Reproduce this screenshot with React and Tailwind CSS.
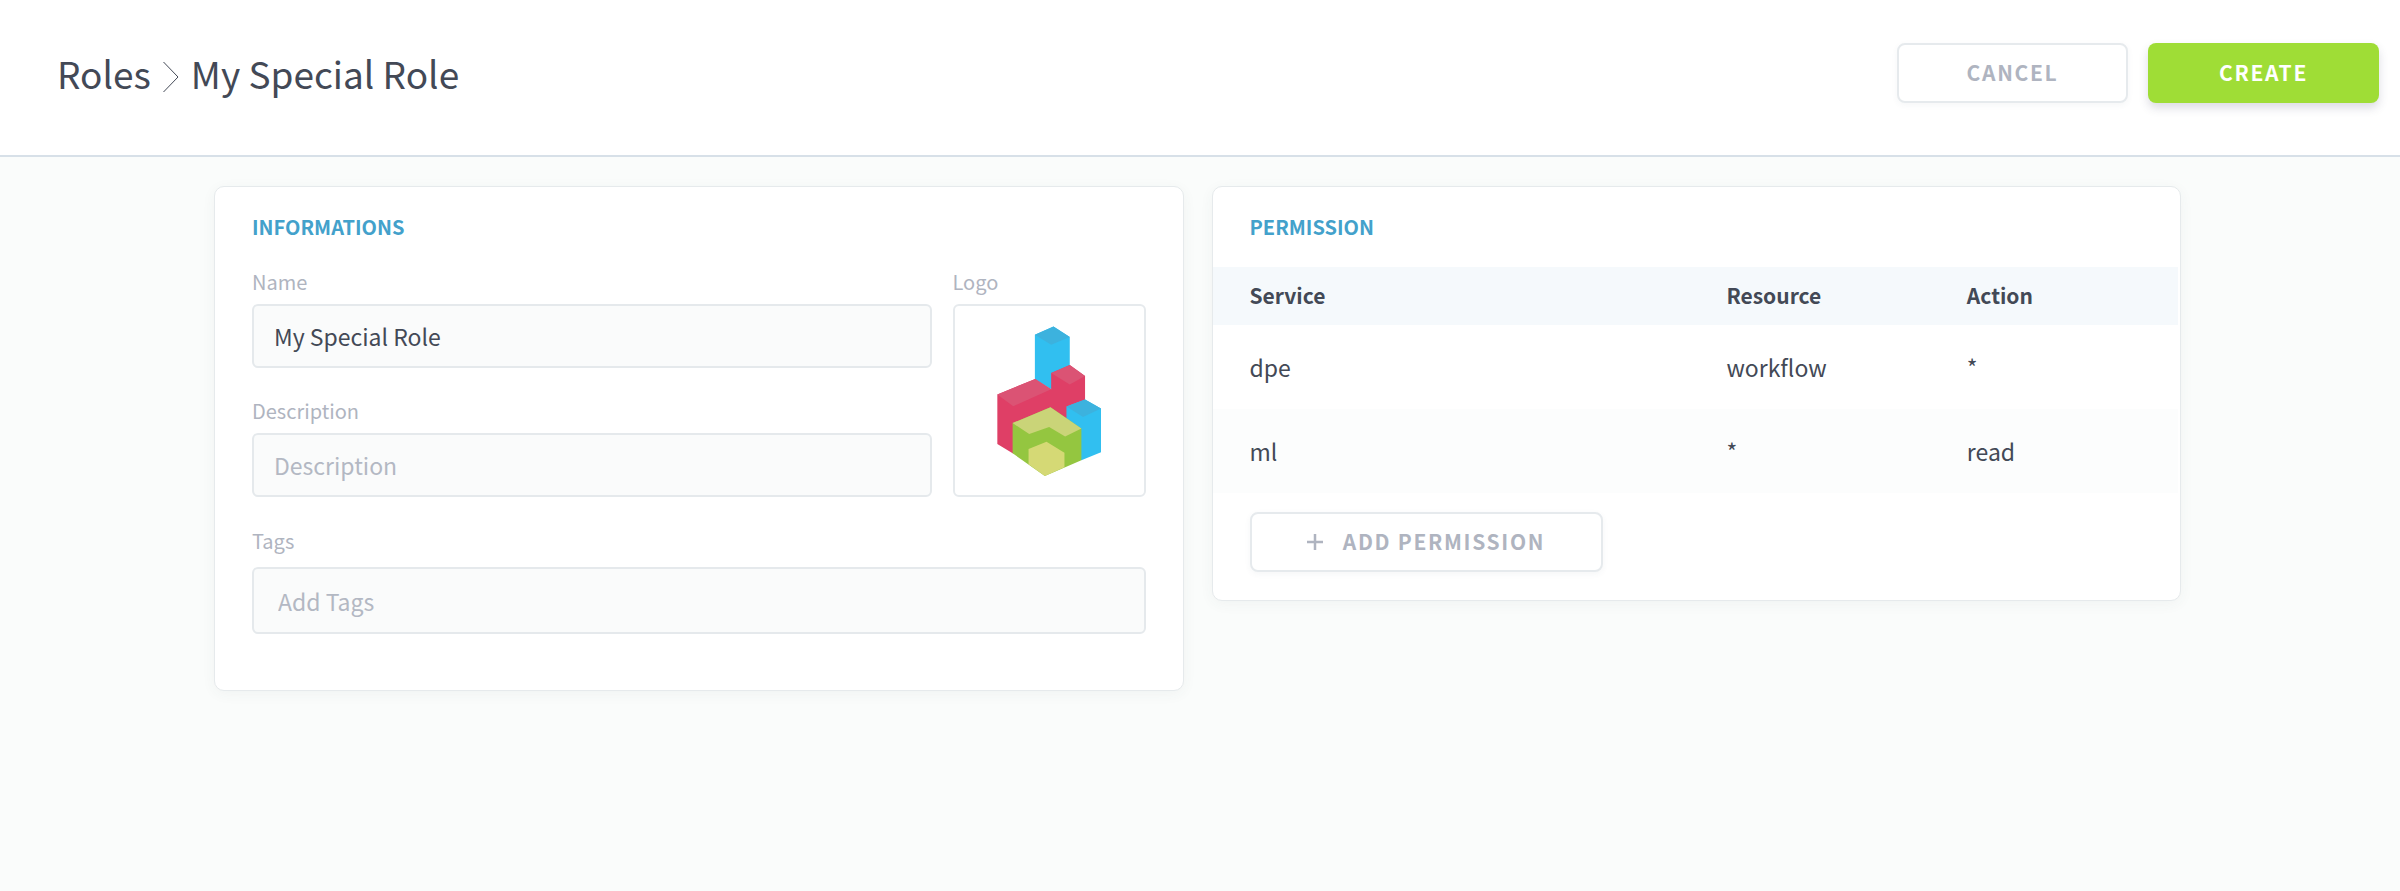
import { useState } from "react"

const permissions = [
  { service: "dpe", resource: "workflow", action: "*" },
  { service: "ml", resource: "*", action: "read" },
]

const labelClass = "block text-[20px] leading-7 text-[#afb4c0]"
const inputClass =
  "block w-full rounded-md border-2 border-[#e5e9ec] bg-[#fafbfb] text-[23px] text-[#434956] placeholder:text-[#b3b8c3] placeholder:opacity-100 outline-none"
const outlineButton =
  "flex h-[60px] items-center justify-center rounded-lg border-2 border-[#e6eaed] bg-white text-[21px] font-bold tracking-[0.08em] text-[#afb4c0] shadow-[0_2px_6px_rgba(60,80,100,0.05)]"

function Card({ title, children }) {
  return (
    <section className="rounded-[10px] border border-[#e6eaec] bg-white pt-5 shadow-[0_3px_14px_rgba(50,70,80,0.05)]">
      <h2 className="px-[37px] text-[20px] leading-10 font-bold text-[#43a1cb]">{title}</h2>
      {children}
    </section>
  )
}

function BlocksLogo() {
  return (
    <svg viewBox="289 196 313 451" className="h-[150px] w-[104px]" aria-hidden="true">
      {/* tall blue block */}
      <polygon points="403,222 459,197 508,229 508,345 452,386 403,356" fill="#31bff0" />
      <polygon points="403,222 459,197 508,229 452,252" fill="#3cb2de" />
      {/* red blocks */}
      <polygon points="290,402 404,355 452,386 452,337 508,313 554,346 554,440 498,600 336,579 290,551" fill="#df3f66" />
      <polygon points="290,402 404,355 452,386 338,437" fill="#db5374" />
      <polygon points="452,337 508,313 554,346 508,372" fill="#db5374" />
      {/* small blue block */}
      <polygon points="498,438 554,417 602,444 602,576 543,600 498,560" fill="#31bff0" />
      <polygon points="498,438 554,417 602,444 548,470" fill="#3cb2de" />
      {/* green corner with hollow front */}
      <polygon points="336,488 450,440 543,504 543,600 433,647 336,579" fill="#94c640" />
      <polygon points="336,488 450,440 543,504 494,528 446,500 386,521" fill="#cad478" />
      <polygon points="384,566 438,544 492,577 492,621 433,647 384,612" fill="#d5d975" />
    </svg>
  )
}

export default function App() {
  const [name, setName] = useState("My Special Role")
  const [description, setDescription] = useState("")
  const [tags, setTags] = useState("")

  return (
    <div className="min-h-screen bg-[#fafcfb] font-['Noto_Sans_CJK_SC','Source_Sans_Pro',sans-serif] text-[#434956]">
      <header className="flex items-start justify-between border-b-2 border-[#d7e0e8] bg-white pt-[43px] pr-[21px] pb-[50px] pl-[57px]">
        <h1 className="flex h-[62px] items-center text-[37px]">
          <a href="#roles">Roles</a>
          <svg viewBox="0 0 16 32" className="mx-3 mt-1.5 h-8 w-4" fill="none" stroke="currentColor" aria-hidden="true">
            <path d="M0.5 1 L15 16 L0.5 31" />
          </svg>
          <span>My Special Role</span>
        </h1>
        <div className="flex gap-5">
          <button type="button" className={`${outlineButton} w-[231px]`}>
            CANCEL
          </button>
          <button
            type="button"
            className="h-[60px] w-[231px] rounded-lg bg-[#9fdd36] text-[21px] font-bold tracking-[0.08em] text-white shadow-[0_5px_10px_rgba(60,60,100,0.18)]"
          >
            CREATE
          </button>
        </div>
      </header>

      <main className="grid grid-cols-2 items-start gap-7 pt-[29px] pr-[219px] pl-[214px]">
        <Card title="INFORMATIONS">
          <form className="px-[37px] pb-14">
            <div className="flex gap-[21px] pt-[21px]">
              <div className="flex-1">
                <label htmlFor="name" className={labelClass}>Name</label>
                <input
                  id="name"
                  value={name}
                  onChange={(e) => setName(e.target.value)}
                  className={`${inputClass} mt-2 h-16 px-5`}
                />
                <label htmlFor="description" className={`${labelClass} mt-[29px]`}>Description</label>
                <input
                  id="description"
                  placeholder="Description"
                  value={description}
                  onChange={(e) => setDescription(e.target.value)}
                  className={`${inputClass} mt-2 h-16 px-5`}
                />
              </div>
              <div>
                <span className={labelClass}>Logo</span>
                <div className="mt-2 flex size-[193px] items-center justify-center rounded-md border-2 border-[#e6eaed] bg-white">
                  <BlocksLogo />
                </div>
              </div>
            </div>
            <label htmlFor="tags" className={`${labelClass} mt-[30px]`}>Tags</label>
            <input
              id="tags"
              placeholder="Add Tags"
              value={tags}
              onChange={(e) => setTags(e.target.value)}
              className={`${inputClass} mt-3 h-[67px] px-6`}
            />
          </form>
        </Card>

        <Card title="PERMISSION">
          <div className="pt-5 pr-0.5">
            <table className="w-full table-fixed text-left">
              <thead>
                <tr className="h-[58px] bg-[#f5f9fc] text-[21px]">
                  <th className="w-[49.4%] pl-[37px] font-bold">Service</th>
                  <th className="w-[24.9%] pl-[37px] font-bold">Resource</th>
                  <th className="pl-[37px] font-bold">Action</th>
                </tr>
              </thead>
              <tbody>
                {permissions.map((p) => (
                  <tr key={p.service} className="h-[84px] text-[23px] even:bg-[#fcfdfd]">
                    <td className="pl-[37px]">{p.service}</td>
                    <td className="pl-[37px]">{p.resource}</td>
                    <td className="pl-[37px]">{p.action}</td>
                  </tr>
                ))}
              </tbody>
            </table>
          </div>
          <div className="px-[37px] pt-[19px] pb-7">
            <button type="button" className={`${outlineButton} w-[353px] gap-5`}>
              <svg viewBox="0 0 16 16" className="size-4" stroke="currentColor" strokeWidth="2.5" aria-hidden="true">
                <path d="M8 0 V16 M0 8 H16" />
              </svg>
              ADD PERMISSION
            </button>
          </div>
        </Card>
      </main>
    </div>
  )
}
